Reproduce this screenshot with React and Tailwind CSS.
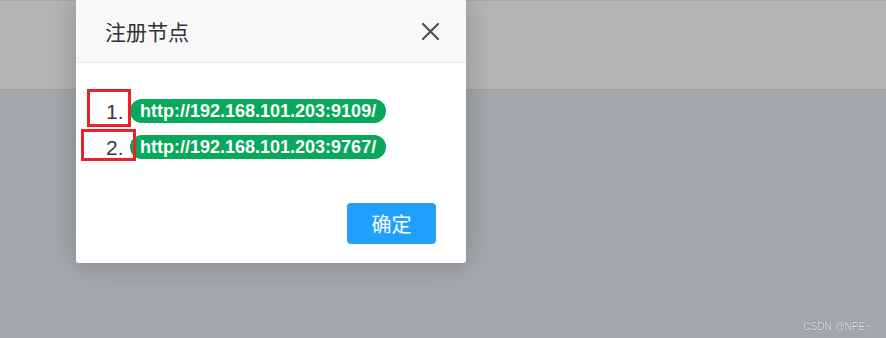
import React from "react";

const urls = ["http://192.168.101.203:9109/", "http://192.168.101.203:9767/"];

export default function App() {
  return (
    <div className="relative w-[886px] h-[338px] overflow-hidden bg-[#a4a7ab]" style={{ fontFamily: '"Liberation Sans", Arial, sans-serif' }}>
      {/* background page header band */}
      <div className="h-[90px] bg-[#b4b4b4] border-t border-b border-t-[#a6a6a6] border-b-[#a3a3a3]" />

      {/* dialog */}
      <div className="absolute left-[76px] top-0 w-[390px] h-[263px] bg-white rounded-b-[3px] shadow-[0_0_28px_rgba(0,0,0,0.22)] flex flex-col">
        <div className="h-[63px] shrink-0 bg-[#f8f8f8] border-b border-[#e8e8e8] flex items-center justify-between pl-[29px] pr-[26px]">
          <span className="text-[21px] text-[#303133] leading-none" style={{ fontFamily: '"Noto Sans CJK SC", sans-serif' }}>注册节点</span>
          <svg width="19" height="19" viewBox="0 0 19 19" className="text-[#4f4f5a]">
            <path d="M2 2 L17 17 M17 2 L2 17" stroke="currentColor" strokeWidth="2.2" strokeLinecap="round" />
          </svg>
        </div>
        <div className="pt-[36px] pl-[30px] flex flex-col gap-[12px]">
          {urls.map((u, i) => (
            <div key={u} className="flex items-center h-[24px]">
              <span className="w-[17px] text-right text-[21px] leading-none text-[#3a3a3a]">{i + 1}.</span>
              <span className="ml-[7px] h-[24px] flex items-center rounded-full bg-[#07a85a] px-[10px] text-white font-bold text-[18px] leading-none">{u}</span>
            </div>
          ))}
        </div>
        <div className="mt-auto flex justify-end pr-[30px] pb-[19px]">
          <button className="w-[89px] h-[41px] rounded-[4px] bg-[#1fa0ff] text-white text-[20px] leading-none" style={{ fontFamily: '"Noto Sans CJK SC", sans-serif' }}>确定</button>
        </div>
      </div>

      {/* red annotation boxes */}
      <div className="absolute left-[87px] top-[89px] w-[44px] h-[38px] border-[3px] border-[#e8212b]" />
      <div className="absolute left-[81px] top-[129px] w-[55px] h-[32px] border-[3px] border-[#e8212b]" />

      {/* watermark */}
      <div className="absolute right-[15px] bottom-[6px] text-[10px] leading-none text-[#e4e4e4] [text-shadow:0_0_1px_rgba(0,0,0,0.5)]">CSDN @NPE~</div>
    </div>
  );
}
